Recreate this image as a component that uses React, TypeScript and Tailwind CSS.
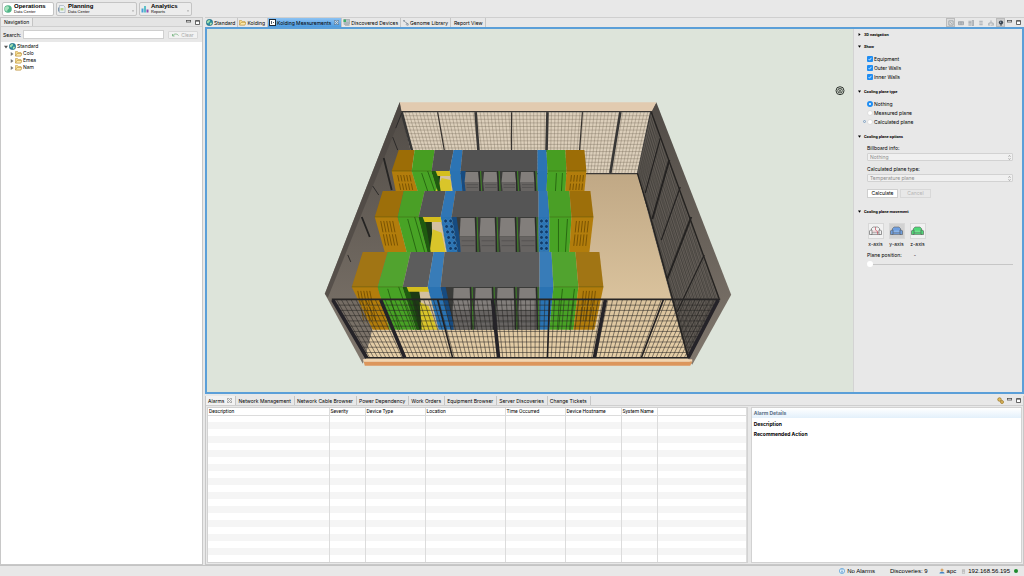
import type { ReactNode } from 'react';
import clsx from 'clsx';

type Point = [number, number];

/* ---------- small icons ---------- */

function GlobeIcon() {
  return (
    <svg viewBox="0 0 14 14" className="size-[7px] shrink-0">
      <circle cx="7" cy="7" r="6.5" fill="#2f8f9d" />
      <path d="M3 3c3-2 5-1 5 1s-3 2-3 4-3 0-4-2zM8 8c3-1 5 0 4 2s-3 3-4 2z" fill="#a6e0b0" />
      <circle cx="7" cy="7" r="6.3" fill="none" stroke="#1f5f7a" />
    </svg>
  );
}

function FolderIcon() {
  return (
    <svg viewBox="0 0 14 14" className="size-[7px] shrink-0">
      <path d="M1 12V3h4l1.500 2H12v7z" fill="#f6dc90" stroke="#b98a2c" />
      <path d="M1 12l3-5h10l-2.500 5z" fill="#fbe9ad" stroke="#b98a2c" />
    </svg>
  );
}

function MeasureIcon() {
  return (
    <svg viewBox="0 0 14 14" className="size-[7px] shrink-0">
      <rect x="1" y="1" width="12" height="12" fill="#fff" stroke="#1b2733" strokeWidth="2" />
      <path d="M5 4v6M8 7h2" stroke="#1b2733" strokeWidth="1.500" />
    </svg>
  );
}

function DeviceIcon() {
  return (
    <svg viewBox="0 0 14 14" className="size-[7px] shrink-0">
      <rect x="2" y="1" width="11" height="10" fill="#b9c4c8" stroke="#8a8f94" />
      <rect x="1" y="1" width="5" height="5" fill="#3fae6a" />
      <path d="M4 8h8M4 13h9" stroke="#8a8f94" />
    </svg>
  );
}

function GenomeIcon() {
  return (
    <svg viewBox="0 0 14 14" className="size-[7px] shrink-0">
      <path d="M2 2l4 4 4 2 2 4M3 5l3-3M8 11l3-3" fill="none" stroke="#7c8894" strokeWidth="1.400" />
      <circle cx="11" cy="11" r="2" fill="none" stroke="#7c8894" />
    </svg>
  );
}

function CloseIcon() {
  return (
    <svg viewBox="0 0 12 12" className="size-[5px] shrink-0">
      <path d="M1 1h3l2 3 2-3h3v3L8 6l3 2v3H8L6 8l-2 3H1V8l3-2-3-2z" fill="#fff" fillOpacity="0.6" stroke="#444" />
    </svg>
  );
}

function PaneControls() {
  return (
    <>
      <button aria-label="Minimize" className="flex h-[9px] w-[9px] items-start justify-center pt-[2px]">
        <svg viewBox="0 0 10 10" className="size-[5px]">
          <rect x="0.500" y="1" width="9" height="3" fill="#fff" stroke="#444" strokeWidth="1.500" />
        </svg>
      </button>
      <button aria-label="Maximize" className="flex h-[9px] w-[9px] items-center justify-center">
        <svg viewBox="0 0 10 10" className="size-[5px]">
          <path d="M1 1h8v8H1z" fill="#fff" stroke="#444" strokeWidth="1.600" />
          <path d="M1 2.500h8" stroke="#444" strokeWidth="1.500" />
        </svg>
      </button>
    </>
  );
}

function Caret({ open, className }: { open?: boolean; className?: string }) {
  return (
    <svg viewBox="0 0 8 8" className={clsx('shrink-0', className)}>
      {open ? <path d="M0 1.500h8L4 7z" fill="currentColor" /> : <path d="M1.500 0v8L7 4z" fill="currentColor" />}
    </svg>
  );
}

/* ---------- top bar ---------- */

interface PerspectiveProps {
  title: string;
  subtitle: string;
  icon: ReactNode;
  className: string;
  menu?: boolean;
}

function Perspective({ title, subtitle, icon, className, menu }: PerspectiveProps) {
  return (
    <button
      className={clsx('flex h-[14px] items-center gap-[2px] rounded-[2px] border border-[#c4c4c4] px-px text-left', className)}
    >
      {icon}
      <span className="flex flex-1 flex-col font-['Liberation_Sans',sans-serif]">
        <span className="text-[6px] leading-[6px] font-bold">{title}</span>
        <span className="text-[4px] leading-[5px]">{subtitle}</span>
      </span>
      {menu && <Caret open className="mr-px mb-[3px] size-[2px] self-end text-[#888]" />}
    </button>
  );
}

function TopBar() {
  return (
    <header className="flex h-[17px] shrink-0 items-center gap-[2px] px-[2px]">
      <Perspective
        title="Operations"
        subtitle="Data Center"
        className="w-[52px] bg-white"
        icon={
          <svg viewBox="0 0 16 16" className="size-[8px]">
            <circle cx="8" cy="8" r="7.500" fill="#4fb387" />
            <path d="M2 5c4-4 7-3 8 0s-5 4-3 8C3 13 0 9 2 5z" fill="#a9e3bd" />
          </svg>
        }
      />
      <Perspective
        title="Planning"
        subtitle="Data Center"
        className="w-[81px] bg-[#ececec]"
        menu
        icon={
          <svg viewBox="0 0 16 16" className="size-[8px]">
            <path d="M3 1h8l3 3v11H3z" fill="#e9f0f5" stroke="#8295a5" />
            <path d="M5 6h6v5H5z" fill="#b9d58b" />
            <path d="M1 5v8" stroke="#5d7f9c" strokeWidth="1.500" />
          </svg>
        }
      />
      <Perspective
        title="Analytics"
        subtitle="Reports"
        className="w-[53px] bg-[#ececec]"
        menu
        icon={
          <svg viewBox="0 0 16 16" className="size-[8px]">
            <rect x="1" y="7" width="4" height="8" fill="#4a9fd8" />
            <rect x="6" y="2" width="4" height="13" fill="#5dc0c8" />
            <rect x="11" y="9" width="4" height="6" fill="#8b4fb0" />
          </svg>
        }
      />
    </header>
  );
}

/* ---------- navigation ---------- */

function Navigation() {
  return (
    <aside className="flex w-[203px] shrink-0 flex-col border border-[#c8c8c8]">
      <div className="flex h-[9px] items-center border-b border-[#cfcfcf] bg-[#e4e4e4]">
        <h2 className="h-full border-r border-[#c4c4c4] bg-[#ececec] px-[3px] leading-[9px]">Navigation</h2>
        <div className="ml-auto flex">
          <PaneControls />
        </div>
      </div>
      <form className="flex h-[15px] shrink-0 items-center gap-[2px] px-[2px]">
        <label htmlFor="search">Search:</label>
        <input id="search" className="h-[9px] min-w-0 flex-1 border border-[#cfcfcf] bg-white px-[2px]" />
        <button
          type="button"
          className="mr-[2px] ml-[2px] flex h-[8px] w-[30px] items-center justify-center gap-[2px] rounded-[1px] border border-[#d8d8d8] bg-[#f2f2f2] text-[#aaa]"
        >
          <svg viewBox="0 0 14 8" className="h-[4px] w-[7px]">
            <path d="M1 2v4h4M1.500 5.500C4 1 10 1 13 5" fill="none" stroke="#7fb888" strokeWidth="1.800" />
          </svg>
          Clear
        </button>
      </form>
      <ul className="flex-1 bg-white px-[3px] pt-px leading-[7px]">
        <li>
          <div className="flex items-center gap-px">
            <Caret open className="size-[4px] text-[#555]" />
            <GlobeIcon />
            Standard
          </div>
          <ul className="pl-[6px]">
            {['Colo', 'Emea', 'Nam'].map((site) => (
              <li key={site} className="flex items-center gap-px">
                <Caret className="size-[4px] text-[#777]" />
                <FolderIcon />
                {site}
              </li>
            ))}
          </ul>
        </li>
      </ul>
    </aside>
  );
}

/* ---------- 3D room ---------- */

const lerp = (a: Point, b: Point, t: number): Point => [a[0] + (b[0] - a[0]) * t, a[1] + (b[1] - a[1]) * t];
const pts = (...points: Point[]) => points.map((p) => p.join(',')).join(' ');

// Wire mesh over a quad given as top-left, top-right, bottom-right, bottom-left
function meshPath(tl: Point, tr: Point, br: Point, bl: Point, cols: number, rows: number) {
  const parts: string[] = [];
  for (let i = 1; i < cols; i++) {
    parts.push(`M${lerp(tl, tr, i / cols)}L${lerp(bl, br, i / cols)}`);
  }
  for (let j = 1; j < rows; j++) {
    parts.push(`M${lerp(tl, bl, j / rows)}L${lerp(tr, br, j / rows)}`);
  }
  return parts.join('');
}

const GOLD = ['#9c6d06', '#b27d0c', '#8f6400'];
const GREEN = ['#479e22', '#48a325', '#2d7415'];
const BLUE = ['#2c74b4', '#2a73b3', '#174b80'];
const GREY = ['#525252', '#777473', '#444'];

interface RackRow {
  y: [number, number, number];
  top: number[];
  mid: number[];
  low: number[];
  light: number;
}

// x positions run: gold, green, grey, blue, grey span, blue, green, gold
const rackRows: RackRow[] = [
  {
    y: [150, 171, 191],
    top: [399, 415, 435, 454, 463, 538, 547, 566, 585],
    mid: [392, 412, 432, 450, 461, 538, 548, 567, 587],
    low: [396, 418, 438, 453, 463, 538, 547, 566, 585],
    light: 0,
  },
  {
    y: [191, 217, 252],
    top: [383, 404, 425, 446, 456, 539, 548, 570, 591],
    mid: [375, 398, 419, 441, 452, 539, 550, 572, 594],
    low: [385, 407, 428, 447, 458, 539, 550, 570, 590],
    light: 0.02,
  },
  {
    y: [252, 287, 330],
    top: [363, 388, 411, 434, 445, 540, 552, 576, 600],
    mid: [352, 378, 403, 428, 441, 540, 554, 579, 604],
    low: [373, 390, 417, 439, 451, 540, 550, 574, 595],
    light: 0.06,
  },
];

const palette = [GOLD, GREEN, GREY, BLUE, GREY, BLUE, GREEN, GOLD];

function Racks({ row }: { row: RackRow }) {
  const { y, top, mid, low, light } = row;
  const [y0, y1, y2] = y;
  const h = y2 - y1;
  const bays = [0, 1, 2, 3];
  const start = low[4] + 1;
  const step = (low[5] - start) / 4;

  return (
    <g>
      {palette.map((colors, i) => {
        const front = i === 2 ? '#1d3a14' : i === 4 ? '#3a3b39' : colors[1];
        return (
          <g key={i}>
            <polygon points={pts([mid[i], y1], [mid[i + 1], y1], [low[i + 1], y2], [low[i], y2])} fill={front} />
            <polygon points={pts([top[i], y0], [top[i + 1], y0], [mid[i + 1], y1], [mid[i], y1])} fill={colors[0]} />
          </g>
        );
      })}
      <polygon points={pts([top[0], y0], [top[8], y0], [mid[8], y1], [mid[0], y1])} fill="#fff" fillOpacity={light} />

      {/* open bay with yellow floor plate */}
      <polygon points={pts([mid[3] - 9, y1], [mid[3], y1], [low[3], y2], [low[3] - 14, y2])} fill="#d3c0a0" />
      <polygon
        points={pts([mid[3] - 8, y1 + h * 0.35], [mid[3] + 1, y1 + h * 0.45], [low[3] - 1, y2], [low[3] - 17, y2])}
        fill="#d9c52a"
      />
      <polygon points={pts([mid[2], y1], [mid[2] + 6, y1], [low[2] + 3, y2], [low[2], y2])} fill="#1f5b10" />
      <polygon points={pts([mid[2] + 4, y1], [mid[3], y1], [mid[3] + 1, y1 + 5], [mid[2] + 6, y1 + 5])} fill="#d4be1e" />

      {/* side of the left blue rack */}
      <polygon points={pts([mid[4], y1], [mid[4] + 5, y1], [low[4] + 4, y2], [low[4], y2])} fill={BLUE[2]} />

      {/* cabinets seen between the rows */}
      {bays.map((i) => {
        const x = start + i * step;
        return (
          <g key={i}>
            <polygon
              points={pts([x + 2, y1 + 1], [x + step - 4, y1 + 1], [x + step - 3, y1 + h * 0.55], [x + 1, y1 + h * 0.55])}
              fill="#827e7b"
            />
            <polygon
              points={pts([x + 1, y1 + h * 0.55], [x + step - 3, y1 + h * 0.55], [x + step - 3, y2], [x + 2, y2])}
              fill="#676462"
            />
            <path
              d={`M${x + 3} ${y1 + h * 0.68}H${x + step - 4}M${x + 3} ${y1 + h * 0.82}H${x + step - 4}`}
              stroke="#4a4848"
              strokeWidth="0.6"
            />
            <path d={`M${x + step - 1.5} ${y1}L${x + step - 0.5} ${y2}`} stroke="#3f7d28" strokeWidth="1.2" />
            <path d={`M${x + step - 3} ${y1}L${x + step - 2} ${y2}`} stroke="#222" strokeWidth="0.8" />
          </g>
        );
      })}

      {/* door seams and vents */}
      <path
        d={`M${mid[1] + 10} ${y1 + 2}L${low[1] + 10} ${y2}M${mid[2] - 4} ${y1}L${low[2] - 3} ${y2}M${mid[6] + 9} ${y1 + 2}L${low[6] + 9} ${y2}M${mid[7] - 4} ${y1 + 2}L${low[7] - 4} ${y2}`}
        stroke="#256310"
        strokeWidth="0.9"
      />
      <path
        d={[6, 9, 12, 15, 18].map((d) => `M${mid[0] + d} ${y1 + 4}l${h * 0.15} ${h * 0.75}M${mid[7] + d - 1} ${y1 + 4}l${-h * 0.08} ${h * 0.75}`).join('')}
        stroke="#6b4900"
        strokeWidth="0.8"
        strokeDasharray={`${h * 0.33} 2`}
      />
      <path
        d={`M${mid[0]} ${y1}H${mid[2]}M${mid[6]} ${y1}H${mid[8]}`}
        stroke="#3b4a0a"
        strokeOpacity="0.5"
        strokeWidth="0.7"
      />
    </g>
  );
}

const coolers: Point[] = [0, 1, 2, 3, 4, 5].flatMap((i): Point[] => [
  [446 + i, 221 + i * 5.5],
  [451 + i, 221 + i * 5.5],
  [542, 221 + i * 5.5],
  [547, 221 + i * 5.5],
]);

function Room() {
  return (
    <svg viewBox="207 29 647 363" className="h-full w-full" role="img" aria-label="Room">
      <defs>
        <linearGradient id="floor" x1="0" y1="0" x2="0" y2="1">
          <stop offset="0" stopColor="#c0a885" />
          <stop offset="1" stopColor="#e6cfa8" />
        </linearGradient>
        <linearGradient id="sideWall" x1="0" y1="0" x2="0" y2="1">
          <stop offset="0" stopColor="#504b46" />
          <stop offset="1" stopColor="#80776d" />
        </linearGradient>
      </defs>

      {/* walls and floor */}
      <polygon points="400,102 325,294 363,364 376,330 412,173 412,112" fill="url(#sideWall)" />
      <polygon points="657,102 732,295 693,365 688,358 638,173 651,112" fill="url(#sideWall)" />
      <polygon points="400,102 657,102 652,112 402,112" fill="#e2cbb0" />
      <polygon points="402,112 652,112 638,173 416,173" fill="#dccfbb" />
      <polygon points="412,173 638,173 689,360 365,360 373,328" fill="url(#floor)" />
      <path
        d={meshPath([402, 112], [652, 112], [638, 173], [420, 173], 70, 17)}
        stroke="#6e6251"
        strokeWidth="0.5"
        strokeOpacity="0.7"
      />
      <path d="M401 111.500H653M420 173.500H638" stroke="#3b3835" strokeWidth="1.300" />
      <path d="M438 112L445 152M512 112V152M583 112L580 152" stroke="#36322f" strokeWidth="1.200" />
      <path d="M402 112L413 153M476 112L479 152M548 112L547 152M621 112L611 173M652 112L639 173" stroke="#373635" strokeWidth="2.600" />

      {/* left wall */}
      <polygon points="400,102 325,294 328,298 402,114" fill="#4b4641" fillOpacity="0.7" />
      <path d="M384 158L392 190M362 217L370 237" stroke="#252423" strokeWidth="1.800" />
      <path d="M393 137L398 150M373 186L379 195M348 255L351 262M402 113L396 128" stroke="#2c2a29" strokeWidth="1" />

      {/* right wall */}
      <polygon points="652,112 720,299 688,358 638,173" fill="#625c56" />
      <path
        d={meshPath([652, 112], [720, 299], [688, 358], [638, 173], 60, 14)}
        stroke="#292725"
        strokeWidth="0.4"
        strokeOpacity="0.7"
      />
      <path d="M652 112L720 299M638 173L650 213L673 298L689 358" fill="none" stroke="#252321" strokeWidth="1.400" />
      <path d="M661 138L646 193M681 187L662 240M705 255L678 312" stroke="#242221" strokeWidth="1.200" />
      <path d="M670 160L653 219M692 217L668 279" stroke="#242221" strokeWidth="2" />

      <Racks row={rackRows[0]} />
      <Racks row={rackRows[1]} />
      {coolers.map(([x, y]) => (
        <circle key={`${x}-${y}`} cx={x} cy={y} r="1.900" fill="#123b69" stroke="#4f9ddb" strokeWidth="0.5" />
      ))}
      <Racks row={rackRows[2]} />

      {/* front fence */}
      <path
        d={meshPath([332, 300], [720, 300], [689, 358], [366, 358], 80, 11)}
        stroke="#252220"
        strokeWidth="0.7"
        strokeOpacity="0.75"
      />
      <path d="M332 299.500H721M365 358H690" stroke="#272525" strokeWidth="1.600" />
      <path d="M438 300L453 358M550 300L548 358M664 300L642 358" stroke="#222022" strokeWidth="1.600" />
      <path d="M333 300L367 358M381 300L405 358M493 300L499 358M606 300L595 358M719 300L689 358" stroke="#252328" strokeWidth="3.600" />
      <polygon points="363,359.500 693,359.500 693,362 364,362" fill="#f3d5b0" />
      <polygon points="364,362 693,362 691,366 365,366" fill="#dc965c" />

      {/* compass */}
      <circle cx="841" cy="90.500" r="4" fill="#dde4da" stroke="#2d332d" strokeWidth="1" />
      <circle cx="841" cy="90.500" r="2.300" fill="none" stroke="#2d332d" strokeWidth="0.8" />
      <path d="M839.500 89l3 3M842.500 89l-3 3" stroke="#2d332d" strokeWidth="0.8" />
    </svg>
  );
}

/* ---------- properties ---------- */

interface SectionProps {
  title: string;
  open?: boolean;
  children?: ReactNode;
}

function Section({ title, open, children }: SectionProps) {
  return (
    <section>
      <button className="flex h-[9px] items-center gap-[3px] font-['Roboto','Liberation_Sans',sans-serif] text-[4px] font-bold">
        <Caret open={open} className="size-[3px]" />
        {title}
      </button>
      {children && <div className="pr-[5px] pl-[9px]">{children}</div>}
    </section>
  );
}

function Check({ label }: { label: string }) {
  return (
    <label className="flex h-[9px] items-center gap-px">
      <span className="grid size-[6px] place-items-center">
        <input
          type="checkbox"
          defaultChecked
          className="col-start-1 row-start-1 size-[6px] appearance-none rounded-[1px] bg-[#1f8df2]"
        />
        <svg viewBox="0 0 10 10" className="pointer-events-none col-start-1 row-start-1 size-[4px]">
          <path d="M1.500 5l2.500 3L8.500 2" fill="none" stroke="#fff" strokeWidth="1.800" />
        </svg>
      </span>
      {label}
    </label>
  );
}

function PlaneRadio({ label, checked, marked }: { label: string; checked?: boolean; marked?: boolean }) {
  return (
    <label className="flex h-[9px] items-center gap-px">
      {marked && <span className="-ml-[4px] size-[3px] rounded-full border border-[#7ea3c4]" />}
      <input
        type="radio"
        name="plane"
        defaultChecked={checked}
        className="size-[6px] appearance-none rounded-full border border-[#dedede] bg-white checked:border-2 checked:border-[#1f8df2]"
      />
      {label}
    </label>
  );
}

function Dropdown({ id, label, value }: { id: string; label: string; value: string }) {
  return (
    <div className="mb-[4px] flex flex-col">
      <label htmlFor={id} className="leading-[9px]">
        {label}
      </label>
      <div className="grid items-center">
        <select
          id={id}
          disabled
          className="col-start-1 row-start-1 h-[8px] w-full appearance-none rounded-[1px] border border-[#d2d2d2] bg-[#f0f0f0] px-[2px] leading-[6px] text-[#8d8d8d]"
        >
          <option>{value}</option>
        </select>
        <svg viewBox="0 0 8 14" className="pointer-events-none col-start-1 row-start-1 mr-[2px] h-[5px] w-[3px] justify-self-end">
          <path d="M1 5l3-4 3 4M1 9l3 4 3-4" fill="none" stroke="#888" strokeWidth="1.600" />
        </svg>
      </div>
    </div>
  );
}

const axes = [
  { name: 'x-axis', body: '#f2f2f2', seat: '#ecd0d3', active: false },
  { name: 'y-axis', body: '#6f9fe0', seat: '#8bb4ea', active: true },
  { name: 'z-axis', body: '#4fd977', seat: '#72e08f', active: false },
];

function Properties() {
  return (
    <aside className="flex w-[169px] shrink-0 flex-col gap-[3px] border-l border-[#d3d3d3] px-[4px] pt-px">
      <Section title="3D navigation" />
      <Section title="Show" open>
        <div className="py-[3px]">
          <Check label="Equipment" />
          <Check label="Outer Walls" />
          <Check label="Inner Walls" />
        </div>
      </Section>
      <Section title="Cooling plane type" open>
        <div className="py-[3px]">
          <PlaneRadio label="Nothing" checked />
          <PlaneRadio label="Measured plane" />
          <PlaneRadio label="Calculated plane" marked />
        </div>
      </Section>
      <Section title="Cooling plane options" open>
        <div className="py-[3px]">
          <Dropdown id="billboard" label="Billboard info:" value="Nothing" />
          <Dropdown id="plane-type" label="Calculated plane type:" value="Temperature plane" />
          <div className="flex gap-[2px] py-[3px]">
            <button className="h-[9px] w-[31px] border border-[#cfcfcf] bg-white leading-[7px]">Calculate</button>
            <button disabled className="h-[9px] w-[31px] border border-[#d8d8d8] leading-[7px] text-[#b5b5b5]">
              Cancel
            </button>
          </div>
        </div>
      </Section>
      <Section title="Cooling plane movement" open>
        <div className="flex gap-[4px] pt-[7px]">
          {axes.map((axis) => (
            <button key={axis.name} className="flex w-[17px] flex-col items-center gap-px">
              <span
                className={clsx(
                  'flex size-[16px] items-center justify-center border border-[#d8d8d8]',
                  axis.active ? 'bg-[#d2d2d2]' : 'bg-[#f1f1f1]',
                )}
              >
                <svg viewBox="0 0 26 20" className="h-[10px] w-[13px]">
                  <path d="M5 10V5l3-3h10l3 3v12H5z" fill={axis.body} stroke="#666" strokeWidth="1.200" />
                  <path d="M7 9h12v4H7z" fill={axis.seat} />
                  <path d="M1 10l2-2h3v9H1zM20 8h3l2 2v7h-5z" fill={axis.body} stroke="#555" strokeWidth="1.200" />
                  <path d="M6 13.500h14" stroke="#666" />
                  {axis.name === 'x-axis' && <path d="M13 2v6l4 3v6" fill="none" stroke="#c0394b" strokeWidth="1.200" />}
                </svg>
              </span>
              <span className="leading-[9px]">{axis.name}</span>
            </button>
          ))}
        </div>
        <div className="mt-px flex h-[9px] items-center gap-[12px]">
          <label htmlFor="position">Plane position:</label>
          <output htmlFor="position">-</output>
        </div>
        <input
          id="position"
          type="range"
          defaultValue={0}
          className="mt-[2px] block h-[6px] w-full appearance-none bg-[linear-gradient(#c6c6c6,#c6c6c6)] bg-[length:100%_1px] bg-center bg-no-repeat [&::-webkit-slider-thumb]:size-[6px] [&::-webkit-slider-thumb]:appearance-none [&::-webkit-slider-thumb]:rounded-full [&::-webkit-slider-thumb]:bg-white"
        />
      </Section>
    </aside>
  );
}

/* ---------- editor ---------- */

const editorTabs: { label: string; icon?: ReactNode; active?: boolean }[] = [
  { label: 'Standard', icon: <GlobeIcon /> },
  { label: 'Kolding', icon: <FolderIcon /> },
  { label: 'Kolding Measurements', icon: <MeasureIcon />, active: true },
  { label: 'Discovered Devices', icon: <DeviceIcon /> },
  { label: 'Genome Library', icon: <GenomeIcon /> },
  { label: 'Report View' },
];

const tools = [
  { name: 'Floor view', d: 'M2 2h10v10H2zM5 5l4 4', on: true },
  { name: 'Rack view', d: 'M1 4h12v7H1zM1 7h12M5 4v7M9 4v7' },
  { name: 'List view', d: 'M1 3h7M1 6h7M1 9h7M1 12h7M10 1v12h3V1z' },
  { name: 'Outline', d: 'M3 3h8M3 7h8M3 11h8' },
  { name: 'Network', d: 'M7 1v5M2 12V7h10v5M1 12h3M10 12h3M6 12h3' },
];

function EditorTabs() {
  return (
    <div className="flex h-[10px] shrink-0 items-stretch border-t border-[#cfcfcf]">
      {editorTabs.map((tab) => (
        <button
          key={tab.label}
          className={clsx(
            'flex items-center gap-px border-r border-[#c6c6c6] pr-[2px]',
            tab.icon ? 'pl-px' : 'pl-[3px]',
            tab.active && 'bg-gradient-to-b from-[#8cc3f3] to-[#4c9be0]',
          )}
        >
          {tab.icon}
          {tab.label}
          {tab.active && (
            <span className="pl-[2px]">
              <CloseIcon />
            </span>
          )}
        </button>
      ))}
      <div className="ml-auto flex items-center pr-px">
        {tools.map((tool) => (
          <button
            key={tool.name}
            aria-label={tool.name}
            className={clsx('mr-px flex size-[9px] items-center justify-center', tool.on && 'border border-[#bbb] bg-[#dcdcdc]')}
          >
            <svg viewBox="0 0 14 14" className="size-[6px]">
              <path d={tool.d} fill="none" stroke="#808890" strokeWidth="1.400" />
            </svg>
          </button>
        ))}
        <button aria-label="3D view" className="flex size-[9px] items-center justify-center border border-[#bbb] bg-[#cfcfcf]">
          <svg viewBox="0 0 14 14" className="size-[6px]">
            <circle cx="7" cy="6" r="5" fill="#38424d" />
            <circle cx="6" cy="5" r="1.500" fill="#a8bccd" />
            <path d="M7 10v4" stroke="#38424d" strokeWidth="2" />
          </svg>
        </button>
        <PaneControls />
      </div>
    </div>
  );
}

/* ---------- alarms ---------- */

const dockTabs = [
  'Alarms',
  'Network Management',
  'Network Cable Browser',
  'Power Dependency',
  'Work Orders',
  'Equipment Browser',
  'Server Discoveries',
  'Change Tickets',
];

const columns = [
  { label: 'Description', width: 'w-[121px]' },
  { label: 'Severity', width: 'w-[36px]' },
  { label: 'Device Type', width: 'w-[60px]' },
  { label: 'Location', width: 'w-[80px]' },
  { label: 'Time Occurred', width: 'w-[60px]' },
  { label: 'Device Hostname', width: 'w-[56px]' },
  { label: 'System Name', width: 'w-[36px]' },
  { label: '', width: 'w-auto' },
];

function Dock() {
  return (
    <section className="flex h-[169px] shrink-0 flex-col border-x border-b border-[#c8c8c8]">
      <div className="flex h-[10px] shrink-0 items-stretch border-b border-[#cfcfcf]">
        {dockTabs.map((tab, i) => (
          <button
            key={tab}
            className={clsx('flex items-center gap-[3px] border-r border-[#c6c6c6] pr-[3px] pl-[2px]', i === 0 && 'bg-[#f2f2f2]')}
          >
            {tab}
            {i === 0 && <CloseIcon />}
          </button>
        ))}
        <div className="ml-auto flex items-center">
          <button aria-label="Settings" className="flex size-[9px] items-center justify-center">
            <svg viewBox="0 0 14 14" className="size-[7px]">
              <circle cx="5" cy="5" r="3.500" fill="#e3bf62" stroke="#9a7424" strokeWidth="1.500" />
              <circle cx="10" cy="10" r="3" fill="#e3bf62" stroke="#9a7424" strokeWidth="1.500" />
            </svg>
          </button>
          <PaneControls />
        </div>
      </div>
      <div className="flex min-h-0 flex-1 gap-[3px] p-px">
        <div className="min-w-0 flex-[2] overflow-hidden border border-[#d2d2d2] bg-white">
          <table className="w-full table-fixed border-collapse font-['Roboto','Liberation_Sans',sans-serif] text-[5px]">
            <thead>
              <tr className="h-[7px]">
                {columns.map((col) => (
                  <th
                    key={col.label}
                    className={clsx(
                      'border-r border-b border-[#dcdcdc] p-0 pl-px text-left leading-[6px] font-normal whitespace-nowrap',
                      col.width,
                    )}
                  >
                    {col.label}
                  </th>
                ))}
              </tr>
            </thead>
            <tbody>
              {Array.from({ length: 21 }, (_, row) => (
                <tr key={row} className="h-[7px] even:bg-[#f5f5f5]">
                  {columns.map((col) => (
                    <td key={col.label} className="border-r border-[#dcdcdc] p-0" />
                  ))}
                </tr>
              ))}
            </tbody>
          </table>
        </div>
        <article className="min-w-0 flex-1 border border-[#d2d2d2] bg-white font-bold">
          <h2 className="h-[10px] bg-gradient-to-b from-white to-[#e3f0fb] px-[2px] leading-[10px] text-[#5d7186]">
            Alarm Details
          </h2>
          <h3 className="px-[2px] pt-px leading-[10px]">Description</h3>
          <h3 className="px-[2px] leading-[10px]">Recommended Action</h3>
        </article>
      </div>
    </section>
  );
}

function StatusBar() {
  return (
    <footer className="flex h-[11px] shrink-0 items-center justify-end border-t border-[#c4c4c4] pr-[6px] font-['Liberation_Sans',sans-serif] text-[6px]">
      <span className="flex items-center gap-[2px]">
        <svg viewBox="0 0 14 14" className="size-[6px]">
          <circle cx="7" cy="7" r="6" fill="#e6f3fc" stroke="#3b8ed0" strokeWidth="1.500" />
          <path d="M7 6v5M7 3v1.500" stroke="#2470b5" strokeWidth="2" />
        </svg>
        No Alarms
      </span>
      <span className="ml-[15px]">Discoveries: 9</span>
      <span className="ml-[11px] flex items-center gap-[2px]">
        <svg viewBox="0 0 14 14" className="size-[6px]">
          <path d="M1 13c0-6 12-6 12 0z" fill="#3f83c4" />
          <circle cx="7" cy="4.500" r="3.500" fill="#d6a46a" />
        </svg>
        apc
      </span>
      <span className="ml-[5px] flex items-center gap-[2px]">
        <svg viewBox="0 0 14 14" className="size-[5px]">
          <path d="M4 1h6v12H4zM4 4h6M4 7h6" fill="#ddd" stroke="#999" />
        </svg>
        192.168.56.195
      </span>
      <span className="ml-[4px] size-[4px] rounded-full bg-[#1d8a2c]" />
    </footer>
  );
}

export default function App() {
  return (
    <div className="flex h-screen flex-col overflow-hidden bg-[#e8e8e8] font-['Inter','Liberation_Sans',sans-serif] text-[5px] leading-[8px] text-black">
      <TopBar />
      <div className="flex min-h-0 flex-1 gap-[2px]">
        <Navigation />
        <main className="flex min-w-0 flex-1 flex-col gap-[2px]">
          <EditorTabs />
          <div className="-mt-[2px] flex min-h-0 flex-1 border-2 border-[#5b9fd8]">
            <div className="min-w-0 flex-1 bg-[#dde4da]">
              <Room />
            </div>
            <Properties />
          </div>
          <Dock />
        </main>
      </div>
      <StatusBar />
    </div>
  );
}
